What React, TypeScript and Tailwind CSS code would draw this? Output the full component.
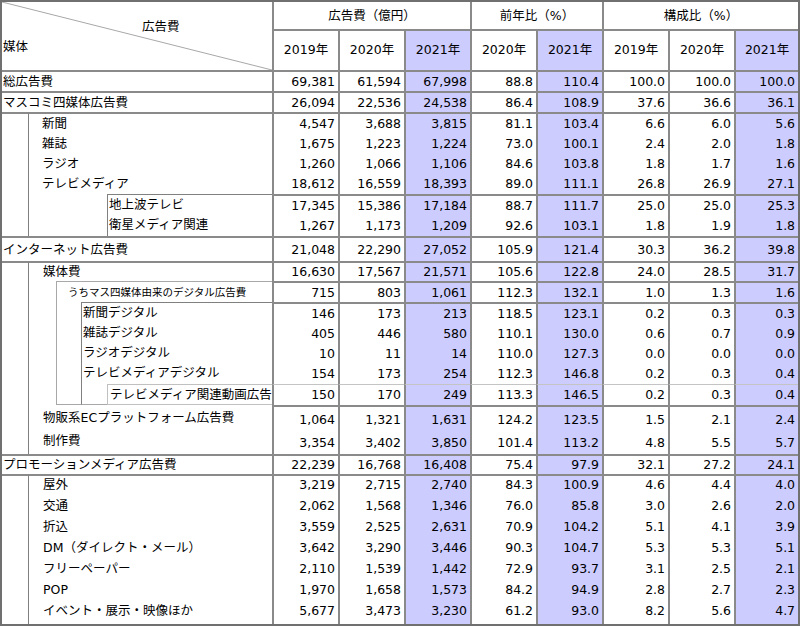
import React from "react";

const HL = [2, 4, 7];

type NumsProps = {
  rows: string[];
  lh?: string;
  box?: string;
  top?: string;
};

// one <td> per numeric column; several lines stacked inside when a group has them
function Nums({ rows, lh = "leading-[18px]", box = "", top = "border-t-2 border-t-[#8a8a8a]" }: NumsProps) {
  const data = rows.map((r) => r.split(" "));
  const multi = data.length > 1;
  return (
    <>
      {Array.from({ length: 8 }).map((_, c) => (
        <td
          key={c}
          className={`${top} border-l-2 border-l-[#8a8a8a] pr-[3px] text-right ${multi ? "align-top" : ""} ${HL.includes(c) ? "bg-[#ccccff]" : ""}`}
        >
          <div className={box}>
            {data.map((r, i) => (
              <div key={i} className={lh}>
                {r[c]}
              </div>
            ))}
          </div>
        </td>
      ))}
    </>
  );
}

function Lines({ items, lh, box = "" }: { items: string[]; lh: string; box?: string }) {
  return (
    <div className={box}>
      {items.map((t) => (
        <div key={t} className={`${lh} whitespace-nowrap`}>
          {t}
        </div>
      ))}
    </div>
  );
}

const YEARS = ["2019年", "2020年", "2021年", "2020年", "2021年", "2019年", "2020年", "2021年"];

export default function App() {
  return (
    <div className="bg-white font-['DejaVu_Sans','Noto_Sans_CJK_JP',sans-serif] text-[12.5px] text-black">
      <table className="w-[800px] table-fixed border-separate border-spacing-0 border-2 border-[#707070]">
        <colgroup>
          <col className="w-[26px]" />
          <col className="w-[28px]" />
          <col className="w-[25px]" />
          <col className="w-[26px]" />
          <col className="w-[165px]" />
          <col className="w-[66px]" />
          <col className="w-[66px]" />
          <col className="w-[66px]" />
          <col className="w-[66px]" />
          <col className="w-[66px]" />
          <col className="w-[66px]" />
          <col className="w-[66px]" />
          <col className="w-[64px]" />
        </colgroup>
        <tbody>
          <tr className="h-[27px]">
            <td colSpan={5} rowSpan={2} className="relative">
              <svg className="absolute inset-0 h-full w-full" preserveAspectRatio="none">
                <line x1="0" y1="0" x2="100%" y2="100%" stroke="#a8a8a8" strokeWidth="1" />
              </svg>
              <span className="absolute left-[140px] top-[15px] leading-[20px]">広告費</span>
              <span className="absolute left-[1px] top-[35px] leading-[20px]">媒体</span>
            </td>
            <td colSpan={3} className="border-l-2 border-[#8a8a8a] text-center leading-[18px]">
              広告費（億円）
            </td>
            <td colSpan={2} className="border-l-2 border-[#8a8a8a] text-center leading-[18px]">
              前年比（%）
            </td>
            <td colSpan={3} className="border-l-2 border-[#8a8a8a] text-center leading-[18px]">
              構成比（%）
            </td>
          </tr>
          <tr className="h-[41px]">
            {YEARS.map((y, c) => (
              <td
                key={c}
                className={`border-l-2 border-t-2 border-[#8a8a8a] text-center ${HL.includes(c) ? "bg-[#ccccff]" : ""}`}
              >
                {y}
              </td>
            ))}
          </tr>

          <tr className="h-[21px]">
            <td colSpan={5} className="border-t-2 border-[#8a8a8a] pl-[1px] leading-[18px]">
              総広告費
            </td>
            <Nums rows={["69,381 61,594 67,998 88.8 110.4 100.0 100.0 100.0"]} />
          </tr>
          <tr className="h-[21px]">
            <td colSpan={5} className="border-t-2 border-[#8a8a8a] pl-[1px] leading-[18px]">
              マスコミ四媒体広告費
            </td>
            <Nums rows={["26,094 22,536 24,538 86.4 108.9 37.6 36.6 36.1"]} />
          </tr>
          <tr className="h-[82px]">
            <td rowSpan={2} className="border-t-2 border-[#8a8a8a]" />
            <td colSpan={4} className="border-t-2 border-l border-t-[#8a8a8a] border-l-[#808080] pl-[13px] align-top">
              <Lines items={["新聞", "雑誌", "ラジオ", "テレビメディア"]} lh="leading-[20px]" />
            </td>
            <Nums
              lh="leading-[20px]"
              rows={[
                "4,547 3,688 3,815 81.1 103.4 6.6 6.0 5.6",
                "1,675 1,223 1,224 73.0 100.1 2.4 2.0 1.8",
                "1,260 1,066 1,106 84.6 103.8 1.8 1.7 1.6",
                "18,612 16,559 18,393 89.0 111.1 26.8 26.9 27.1",
              ]}
            />
          </tr>
          <tr className="h-[41px]">
            <td colSpan={3} className="border-l border-[#808080]" />
            <td className="border-l border-t border-[#808080] pl-[1px] align-top">
              <Lines items={["地上波テレビ", "衛星メディア関連"]} lh="leading-[20px]" />
            </td>
            <Nums
              lh="leading-[20px]"
              rows={[
                "17,345 15,386 17,184 88.7 111.7 25.0 25.0 25.3",
                "1,267 1,173 1,209 92.6 103.1 1.8 1.9 1.8",
              ]}
            />
          </tr>

          <tr className="h-[25px]">
            <td colSpan={5} className="border-t-2 border-[#8a8a8a] pl-[1px] leading-[18px]">
              インターネット広告費
            </td>
            <Nums rows={["21,048 22,290 27,052 105.9 121.4 30.3 36.2 39.8"]} />
          </tr>
          <tr className="h-[20px]">
            <td rowSpan={5} className="border-t-2 border-[#8a8a8a]" />
            <td colSpan={4} className="border-t-2 border-l border-t-[#8a8a8a] border-l-[#808080] pl-[14px] leading-[18px]">
              媒体費
            </td>
            <Nums rows={["16,630 17,567 21,571 105.6 122.8 24.0 28.5 31.7"]} />
          </tr>
          <tr className="h-[21px]">
            <td rowSpan={3} className="border-l border-[#808080]" />
            <td colSpan={3} className="border-l border-t border-[#a8a8a8] pl-[11px] text-[10.5px] leading-[18px] whitespace-nowrap">
              うちマス四媒体由来のデジタル広告費
            </td>
            <Nums rows={["715 803 1,061 112.3 132.1 1.0 1.3 1.6"]} />
          </tr>
          <tr className="h-[82px]">
            <td rowSpan={2} className="border-b border-l border-[#a8a8a8]" />
            <td colSpan={2} className="border-l border-t border-[#808080] pl-[1px] align-top">
              <Lines
                items={["新聞デジタル", "雑誌デジタル", "ラジオデジタル", "テレビメディアデジタル"]}
                lh="leading-[20px]"
              />
            </td>
            <Nums
              lh="leading-[20px]"
              rows={[
                "146 173 213 118.5 123.1 0.2 0.3 0.3",
                "405 446 580 110.1 130.0 0.6 0.7 0.9",
                "10 11 14 110.0 127.3 0.0 0.0 0.0",
                "154 173 254 112.3 146.8 0.2 0.3 0.4",
              ]}
            />
          </tr>
          <tr className="h-[21px]">
            <td className="border-b border-l border-b-[#a8a8a8] border-l-[#808080]" />
            <td className="border-b border-l border-t border-[#c0c0c0] pl-[2px] leading-[18px] whitespace-nowrap">
              テレビメディア関連動画広告
            </td>
            <Nums rows={["150 170 249 113.3 146.5 0.2 0.3 0.4"]} top="border-t border-t-[#c4c4c4]" />
          </tr>
          <tr className="h-[49px]">
            <td colSpan={4} className="border-l border-[#808080] pl-[14px] align-top">
              <Lines items={["物販系ECプラットフォーム広告費", "制作費"]} lh="leading-[23px]" box="pt-[1px]" />
            </td>
            <Nums
              lh="leading-[23px]"
              box="pt-[1px]"
              rows={[
                "1,064 1,321 1,631 124.2 123.5 1.5 2.1 2.4",
                "3,354 3,402 3,850 101.4 113.2 4.8 5.5 5.7",
              ]}
            />
          </tr>

          <tr className="h-[20px]">
            <td colSpan={5} className="border-t-2 border-[#8a8a8a] pl-[1px] leading-[18px]">
              プロモーションメディア広告費
            </td>
            <Nums rows={["22,239 16,768 16,408 75.4 97.9 32.1 27.2 24.1"]} />
          </tr>
          <tr className="h-[150px]">
            <td className="border-t-2 border-[#8a8a8a]" />
            <td colSpan={4} className="border-t-2 border-l border-t-[#8a8a8a] border-l-[#808080] pl-[14px] align-top">
              <Lines
                items={["屋外", "交通", "折込", "DM（ダイレクト・メール）", "フリーペーパー", "POP", "イベント・展示・映像ほか"]}
                lh="leading-[21px]"
                box="-mt-[2px]"
              />
            </td>
            <Nums
              lh="leading-[21px]"
              box="-mt-[2px]"
              rows={[
                "3,219 2,715 2,740 84.3 100.9 4.6 4.4 4.0",
                "2,062 1,568 1,346 76.0 85.8 3.0 2.6 2.0",
                "3,559 2,525 2,631 70.9 104.2 5.1 4.1 3.9",
                "3,642 3,290 3,446 90.3 104.7 5.3 5.3 5.1",
                "2,110 1,539 1,442 72.9 93.7 3.1 2.5 2.1",
                "1,970 1,658 1,573 84.2 94.9 2.8 2.7 2.3",
                "5,677 3,473 3,230 61.2 93.0 8.2 5.6 4.7",
              ]}
            />
          </tr>
        </tbody>
      </table>
    </div>
  );
}
